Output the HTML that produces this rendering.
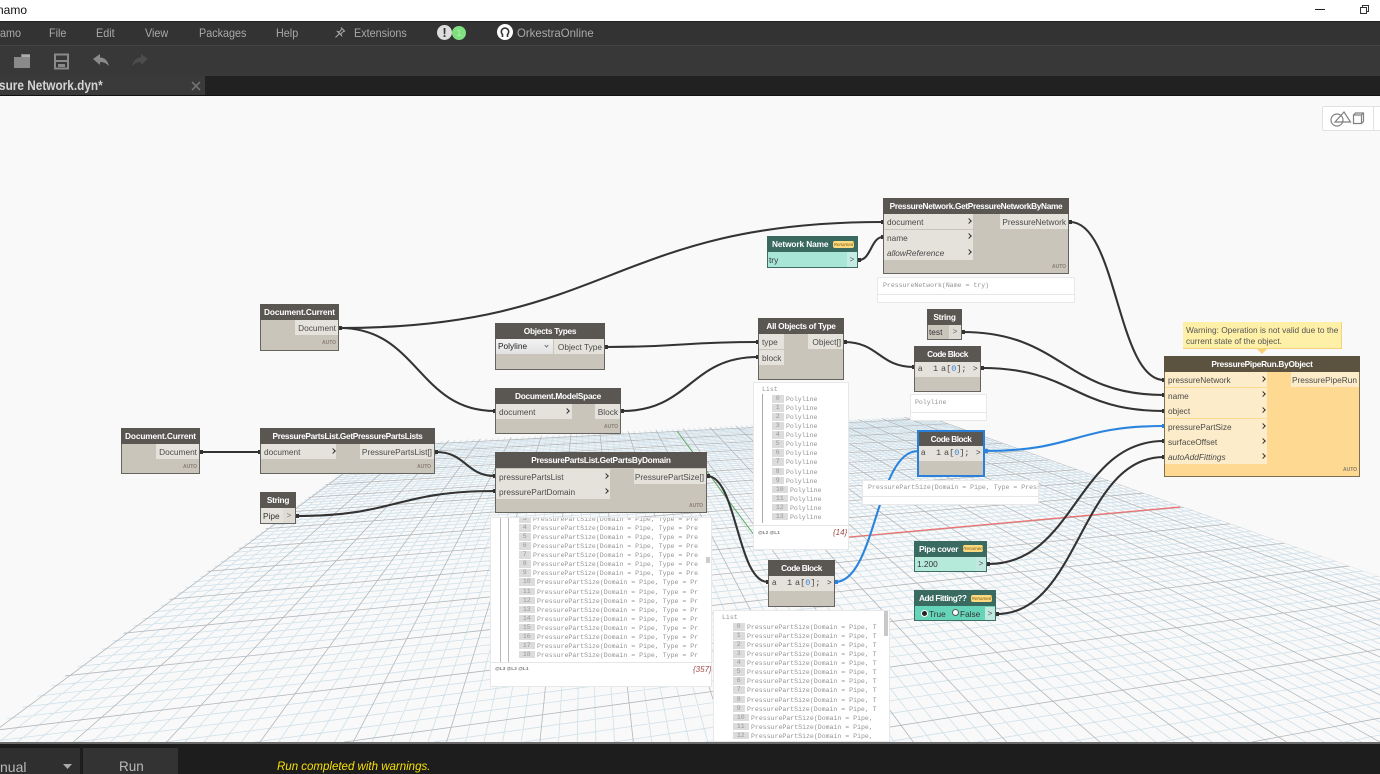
<!DOCTYPE html>
<html><head><meta charset="utf-8"><title>Dynamo</title>
<style>
html,body{margin:0;padding:0;width:1380px;height:774px;overflow:hidden;background:#f9f9f9}
body{position:relative;font-family:"Liberation Sans",sans-serif}
div,span,i{position:absolute;box-sizing:border-box;white-space:nowrap}
.m{color:#a9a9a9;font-size:12px;top:26px;line-height:15px;transform-origin:0 50%;transform:scaleX(.9)}
.n{background:#c9c5bb;border:1px solid #66645f}
.h{background:#5a5753;color:#fff;font-weight:bold;font-size:8.3px;letter-spacing:-.28px;text-align:center;line-height:16px;height:16px}
.cb{letter-spacing:-.5px}
.r{background:#e5e2db;color:#4a4a4a;font-size:8.3px;line-height:16px;height:15px;padding-left:3px}
.o{background:#e5e2db;color:#4a4a4a;font-size:8.3px;line-height:16px;height:15px;text-align:right;padding-right:2px}
.c{width:4px;height:4px;border-top:1.6px solid #333;border-right:1.6px solid #333;transform:rotate(45deg)}
.a{color:#8b8072;font-size:5px;font-weight:bold}
.p{background:#fff;border:1px solid #e8e8e8;font-family:"Liberation Mono",monospace;font-size:6.55px;color:#939393;overflow:hidden}
.l{left:0;right:0;height:1px;background:#e6e6e6}
.t{color:#444;font-size:8.3px}
.list{font-family:"Liberation Mono",monospace;font-size:6.55px;line-height:9.07px;color:#939393;overflow:hidden}
.list p{margin:0;height:9.07px;white-space:nowrap}
.list b{font-weight:normal;display:inline-block;background:#dcdcdc;color:#999;text-align:center;width:11.5px;height:7.5px;line-height:7.5px;margin-right:2.5px;vertical-align:1px}
.list .d b{width:15.5px}
.ft{font-size:4.8px;font-weight:bold;color:#777}
.ct{font-size:8px;font-style:italic;color:#a24b4b}
.code{background:#e5e2db;font-family:"Liberation Mono",monospace;font-size:8.5px;color:#444;line-height:15px}
</style></head>
<body>
<!-- title -->
<div style="left:0;top:0;width:1380px;height:21px;background:#fff"></div>
<div style="left:-3px;top:3px;font-size:12px;line-height:15px;color:#111">namo</div>
<div style="left:1315px;top:9px;width:10px;height:1px;background:#222"></div>
<div style="left:1362px;top:5px;width:7px;height:7px;border:1px solid #333;background:#fff"></div>
<div style="left:1360px;top:7px;width:7px;height:7px;border:1px solid #333;background:#fff"></div>
<!-- menu -->
<div style="left:0;top:21px;width:1380px;height:25px;background:#333;border-top:1px solid #222;border-bottom:1px solid #454545"></div>
<div class="m" style="left:0">amo</div>
<div class="m" style="left:49px">File</div>
<div class="m" style="left:96px">Edit</div>
<div class="m" style="left:145px">View</div>
<div class="m" style="left:199px">Packages</div>
<div class="m" style="left:276px">Help</div>
<svg style="position:absolute;left:333px;top:26px" width="14" height="14" viewBox="0 0 14 14" fill="none" stroke="#aaa" stroke-width="1"><path d="M8 1.500l4 4M9 2.500L6.500 6 4.500 5.500l4 4L8 7.500l3-2.500M6.500 7.500L2.500 11.500"/></svg>
<div class="m" style="left:354px">Extensions</div>
<div style="left:437px;top:25px;width:15px;height:15px;border-radius:50%;background:#ddd;color:#333;font-weight:bold;font-size:13px;line-height:15px;text-align:center">!</div>
<div style="left:452px;top:26px;width:14px;height:14px;border-radius:50%;background:#7fe07f;color:#aef0ae;font-size:9px;line-height:14px;text-align:center">1</div>
<div style="left:497px;top:24px;width:16px;height:16px;border-radius:50%;background:#fff"></div>
<svg style="position:absolute;left:497px;top:24px" width="16" height="16" viewBox="0 0 16 16" fill="none" stroke="#333" stroke-width="1.600"><path d="M5.500 13V10.500A3.700 3.700 0 1 1 10.500 10.500V13"/></svg>
<div class="m" style="left:517px;top:26px;transform:scaleX(.95)">OrkestraOnline</div>
<!-- toolbar -->
<div style="left:0;top:46px;width:1380px;height:30px;background:#383838"></div>
<svg style="position:absolute;left:0;top:46px" width="160" height="30" viewBox="0 0 160 30">
<path d="M14 11h7v-3h9v14H14z" fill="#8a8a8a"/><path d="M22 10h8" stroke="#bbb" stroke-width="1.500"/>
<path d="M55 8.500h13v14H55z" fill="none" stroke="#8a8a8a" stroke-width="2"/><path d="M55 15h13" stroke="#8a8a8a" stroke-width="2"/><path d="M58 18h7v3h-7z" fill="#8a8a8a"/>
<path d="M93 13l7-5v3.500c5 0 8 3.500 9 9-2-3-5-4.500-9-4.500V19z" fill="#8a8a8a"/>
<path d="M148 13l-7-5v3.500c-5 0-8 3.500-9 9 2-3 5-4.500 9-4.500V19z" fill="#4d4d4d"/>
</svg>
<!-- tabs -->
<div style="left:0;top:76px;width:1380px;height:20px;background:#212121;border-bottom:1px solid #111"></div>
<div style="left:0;top:76px;width:205px;height:19px;background:#3a3a3a"></div>
<div style="left:-1px;top:77px;font-size:13.500px;line-height:17px;color:#d4d4d4;font-weight:bold;transform-origin:0 0;transform:scaleX(.875)">sure Network.dyn*</div>
<svg style="position:absolute;left:191px;top:81px" width="10" height="10"><path d="M1 1l8 8M9 1l-8 8" stroke="#777" stroke-width="1.500"/></svg>

<!-- canvas -->
<div style="left:0;top:96px;width:1380px;height:646px;background:#f9f9f9"></div>
<svg id="grid" style="position:absolute;left:0;top:0" width="1380" height="774" viewBox="0 0 1380 774">
<defs><clipPath id="gc"><polygon points="381,444 927,416 1380,577 1380,742 -25,742"/></clipPath></defs>
<g clip-path="url(#gc)" id="gg"></g>
<path d="M677 431L760 543" stroke="#5fa85f" stroke-width="1" fill="none"/>
<path d="M761 545L1180 507" stroke="#f07070" stroke-width="1.200" fill="none"/>
</svg>
<script>
(function(){
var minor='',major='';
for(var n=0;n<=100;n++){var x=-20+18.665*n;var ex=x,ey=742;
if(x>1385){ey=295+447*(1385-585)/(x-585);ex=1385;}
if(x<-5){ey=295+447*(-5-585)/(x-585);ex=-5;}
var s='M585 295L'+ex.toFixed(1)+' '+ey.toFixed(1);if(n%5==0)major+=s;else minor+=s;}
for(var i=0;i<=90;i++){var m=i/5;var dy=2982/(21.93-m);var yg=295+dy;var xg=585+dy/1.363;
var k=(yg-276)/(3738-xg);/* y = 276 + k*(3738-x) */
var y1=276+k*(3738-1385);if(y1>742)continue;
var x0=0,y0=276+k*3738;if(y0>742){x0=3738-(742-276)/k;y0=742;}
var s='M1385 '+y1.toFixed(1)+'L'+x0.toFixed(1)+' '+y0.toFixed(1);if(i%5==0)major+=s;else minor+=s;}
document.getElementById('gg').innerHTML='<path d="'+minor+'" stroke="#cfe0ea" stroke-width=".8" fill="none"/><path d="'+major+'" stroke="#b0b8bd" stroke-width=".8" fill="none"/>';
})();
</script>

<!-- geometry toggle -->
<div style="left:1322px;top:106px;width:58px;height:25px;background:#fff;border:1px solid #e2e2e2;border-right:0;border-radius:2px 0 0 2px"></div>
<div style="left:1373px;top:106px;width:1px;height:25px;background:#e2e2e2"></div>
<svg style="position:absolute;left:1328px;top:108px" width="40" height="22" viewBox="1328 108 40 22" fill="none" stroke="#808080" stroke-width="1.200"><circle cx="1337" cy="120" r="6"/><path d="M1335 122L1344 112 1350.500 122zM1353.500 115h8v8.500h-8zM1353.500 115l2-2h8v8.500l-2 2M1361.500 115l2-2"/></svg>

<!-- wires -->
<svg style="position:absolute;left:0;top:0" width="1380" height="774" viewBox="0 0 1380 774" fill="none" stroke="#333" stroke-width="2.100">
<path d="M340 328C611 328 611 222 883 222"/>
<path d="M340 328C418 328 418 411 495 411"/>
<path d="M859 260C871 260 871 237 883 237"/>
<path d="M1070 222C1117 222 1117 380 1164 380"/>
<path d="M962 332C1063 332 1063 395 1164 395"/>
<path d="M982 368C1073 368 1073 411 1164 411"/>
<path d="M606 347C682 347 682 342 758 342"/>
<path d="M622 411C690 411 690 357 758 357"/>
<path d="M844 342C879 342 879 367 914 367"/>
<path d="M200 452H260"/>
<path d="M436 452C466 452 466 476 495 476"/>
<path d="M297 516C396 516 396 491 495 491"/>
<path d="M707 476C737 476 737 582 768 582"/>
<path d="M988 564C1076 564 1076 441 1164 441"/>
<path d="M997 614C1080 614 1080 457 1164 457"/>
<path d="M835 582C876 582 876 451 918 451" stroke="#2a84de"/>
<path d="M985 451C1075 451 1075 426 1164 426" stroke="#2a84de"/>
<!-- connector nubs -->
<g fill="#333" stroke="none">
<rect x="339" y="326" width="3" height="4"/><rect x="493" y="409" width="2" height="4"/><rect x="881" y="220" width="2" height="4"/><rect x="881" y="235" width="2" height="4"/>
<rect x="858" y="258" width="3" height="4"/><rect x="1069" y="220" width="3" height="4"/><rect x="1162" y="378" width="2" height="4"/><rect x="1162" y="393" width="2" height="4"/>
<rect x="1162" y="409" width="2" height="4"/><rect x="1162" y="439" width="2" height="4"/><rect x="1162" y="455" width="2" height="4"/><rect x="962" y="330" width="3" height="4"/>
<rect x="981" y="366" width="3" height="4"/><rect x="605" y="345" width="3" height="4"/><rect x="756" y="340" width="2" height="4"/><rect x="621" y="409" width="3" height="4"/>
<rect x="756" y="355" width="2" height="4"/><rect x="844" y="340" width="3" height="4"/><rect x="912" y="365" width="2" height="4"/><rect x="200" y="450" width="3" height="4"/>
<rect x="258" y="450" width="2" height="4"/><rect x="435" y="450" width="3" height="4"/><rect x="493" y="474" width="2" height="4"/><rect x="296" y="514" width="3" height="4"/>
<rect x="493" y="489" width="2" height="4"/><rect x="707" y="474" width="3" height="4"/><rect x="766" y="580" width="2" height="4"/><rect x="987" y="562" width="3" height="4"/><rect x="996" y="612" width="3" height="4"/>
</g>
<g fill="#2a84de" stroke="none"><rect x="835" y="580" width="3" height="4"/><rect x="985" y="449" width="3" height="4"/><rect x="1162" y="424" width="2" height="4"/></g>
</svg>

<!-- Network By Name -->
<div class="n" style="left:883px;top:198px;width:186px;height:76px"></div>
<div class="h" style="left:883px;top:198px;width:186px;letter-spacing:-.33px">PressureNetwork.GetPressureNetworkByName</div>
<div class="r" style="left:884px;top:214px;width:89px">document</div><i class="c" style="left:967px;top:219px"></i>
<div class="r" style="left:884px;top:230px;width:89px">name</div><i class="c" style="left:967px;top:234px"></i>
<div class="r" style="left:884px;top:245px;width:89px;font-style:italic">allowReference</div><i class="c" style="left:967px;top:250px"></i>
<div class="o" style="left:1000px;top:214px;width:68px">PressureNetwork</div>
<div class="a" style="left:1052px;top:264px">AUTO</div>
<div class="p" style="left:877px;top:277px;width:198px;height:26px"><span style="left:5px;top:4px">PressureNetwork(Name = try)</span><div class="l" style="top:16px"></div></div>

<!-- Network Name -->
<div class="n" style="left:767px;top:236px;width:91px;height:32px;background:#a8e6d8;border-color:#3d6d64"></div>
<div class="h" style="left:767px;top:236px;width:91px;background:#39695f;text-align:left;padding-left:5px;letter-spacing:-.1px">Network Name</div>
<div style="left:833px;top:241px;width:21px;height:7px;background:#fdd97f;border-radius:2px;color:#7a5a10;font-size:4.500px;line-height:7px;text-align:center;font-style:italic">Renamed</div>
<div class="t" style="left:769px;top:255px;color:#333">try</div>
<div style="left:847px;top:252px;width:10px;height:15px;background:#c5ece3;color:#555;font-size:8px;text-align:center;line-height:15px">&gt;</div>

<!-- All objects -->
<div class="n" style="left:758px;top:318px;width:86px;height:62px"></div>
<div class="h" style="left:758px;top:318px;width:86px">All Objects of Type</div>
<div class="r" style="left:759px;top:334px;width:25px">type</div>
<div class="r" style="left:759px;top:350px;width:25px">block</div>
<div class="o" style="left:808px;top:334px;width:35px">Object[]</div>

<!-- String test -->
<div class="n" style="left:927px;top:309px;width:35px;height:31px"></div>
<div class="h" style="left:927px;top:309px;width:35px">String</div>
<div class="t" style="left:929px;top:327px;color:#333">test</div>
<div style="left:949px;top:325px;width:12px;height:14px;background:#dedbd4;color:#666;font-size:8px;text-align:center;line-height:14px">&gt;</div>

<!-- Code block 1 -->
<div class="n" style="left:914px;top:346px;width:67px;height:46px"></div>
<div class="h cb" style="left:914px;top:346px;width:67px">Code Block</div>
<div class="code" style="left:915px;top:362px;width:65px;height:15px"></div>
<div class="t" style="left:918px;top:364px;font-size:8px">a</div>
<div class="code" style="left:933px;top:362px;background:none">1</div>
<div class="code" style="left:941px;top:362px;background:none">a[<span style="position:static;color:#3a86d8">0</span>];</div>
<div class="t" style="left:973px;top:364px;font-size:8px">&gt;</div>
<div class="p" style="left:910px;top:394px;width:77px;height:27px"><span style="left:4px;top:4px">Polyline</span><div class="l" style="top:17px"></div></div>

<!-- Doc current top -->
<div class="n" style="left:260px;top:304px;width:79px;height:47px"></div>
<div class="h" style="left:260px;top:304px;width:79px;letter-spacing:-.12px">Document.Current</div>
<div class="o" style="left:295px;top:320px;width:43px">Document</div>
<div class="a" style="left:322px;top:340px">AUTO</div>

<!-- Objects types -->
<div class="n" style="left:495px;top:323px;width:110px;height:47px"></div>
<div class="h" style="left:495px;top:323px;width:110px">Objects Types</div>
<div style="left:496px;top:339px;width:57px;height:15px;background:linear-gradient(#f2f2f2,#e2e2e2);color:#222;font-size:8.300px;line-height:14px;padding-left:2px">Polyline</div>
<div style="left:545px;top:344px;width:3px;height:3px;border-bottom:1px solid #777;border-right:1px solid #777;transform:rotate(45deg)"></div>
<div class="o" style="left:554px;top:339px;width:50px">Object Type</div>

<!-- ModelSpace -->
<div class="n" style="left:495px;top:388px;width:126px;height:46px"></div>
<div class="h" style="left:495px;top:388px;width:126px">Document.ModelSpace</div>
<div class="r" style="left:496px;top:404px;width:76px">document</div><i class="c" style="left:565px;top:409px"></i>
<div class="o" style="left:595px;top:404px;width:25px">Block</div>
<div class="a" style="left:604px;top:424px">AUTO</div>

<!-- Doc current left -->
<div class="n" style="left:121px;top:428px;width:79px;height:46px"></div>
<div class="h" style="left:121px;top:428px;width:79px;letter-spacing:-.12px">Document.Current</div>
<div class="o" style="left:156px;top:444px;width:43px">Document</div>
<div class="a" style="left:183px;top:464px">AUTO</div>

<!-- Lists -->
<div class="n" style="left:260px;top:428px;width:175px;height:46px"></div>
<div class="h" style="left:260px;top:428px;width:175px;letter-spacing:-.33px">PressurePartsList.GetPressurePartsLists</div>
<div class="r" style="left:261px;top:444px;width:75px">document</div><i class="c" style="left:331px;top:449px"></i>
<div class="o" style="left:360px;top:444px;width:74px">PressurePartsList[]</div>
<div class="a" style="left:417px;top:464px">AUTO</div>

<!-- String pipe -->
<div class="n" style="left:260px;top:492px;width:36px;height:32px"></div>
<div class="h" style="left:260px;top:492px;width:36px">String</div>
<div style="left:261px;top:508px;width:33px;height:15px;background:#e5e2db"></div>
<div class="t" style="left:263px;top:511px;color:#333">Pipe</div>
<div style="left:283px;top:508px;width:12px;height:15px;background:#dedbd4;color:#777;font-size:8px;text-align:center;line-height:15px">&gt;</div>

<!-- Parts by domain list -->
<div class="p" style="left:490px;top:517px;width:222px;height:170px">
<div style="left:9px;top:0;width:1px;height:145px;background:#bbb"></div>
<div style="left:17px;top:0;width:1px;height:145px;background:#bbb"></div>
<div class="l" style="top:144px"></div>
<div class="list" style="left:28px;top:-3px;width:180px;height:146px">
<p><b>3</b>PressurePartSize(Domain = Pipe, Type = Pre</p>
<p><b>4</b>PressurePartSize(Domain = Pipe, Type = Pre</p>
<p><b>5</b>PressurePartSize(Domain = Pipe, Type = Pre</p>
<p><b>6</b>PressurePartSize(Domain = Pipe, Type = Pre</p>
<p><b>7</b>PressurePartSize(Domain = Pipe, Type = Pre</p>
<p><b>8</b>PressurePartSize(Domain = Pipe, Type = Pre</p>
<p><b>9</b>PressurePartSize(Domain = Pipe, Type = Pre</p>
<p class="d"><b>10</b>PressurePartSize(Domain = Pipe, Type = Pr</p>
<p class="d"><b>11</b>PressurePartSize(Domain = Pipe, Type = Pr</p>
<p class="d"><b>12</b>PressurePartSize(Domain = Pipe, Type = Pr</p>
<p class="d"><b>13</b>PressurePartSize(Domain = Pipe, Type = Pr</p>
<p class="d"><b>14</b>PressurePartSize(Domain = Pipe, Type = Pr</p>
<p class="d"><b>15</b>PressurePartSize(Domain = Pipe, Type = Pr</p>
<p class="d"><b>16</b>PressurePartSize(Domain = Pipe, Type = Pr</p>
<p class="d"><b>17</b>PressurePartSize(Domain = Pipe, Type = Pr</p>
<p class="d"><b>18</b>PressurePartSize(Domain = Pipe, Type = Pr</p>
</div>
<div style="left:215px;top:39px;width:4px;height:6px;background:#ccc"></div>
<div class="ft" style="left:4px;top:149px;font-family:'Liberation Sans',sans-serif">@L3 @L2 @L1</div>
<div class="ct" style="left:202px;top:147px;font-family:'Liberation Sans',sans-serif">{357}</div>
</div>

<!-- Parts by domain -->
<div class="n" style="left:495px;top:452px;width:212px;height:61px"></div>
<div class="h" style="left:495px;top:452px;width:212px">PressurePartsList.GetPartsByDomain</div>
<div class="r" style="left:496px;top:469px;width:114px">pressurePartsList</div><i class="c" style="left:604px;top:474px"></i>
<div class="r" style="left:496px;top:484px;width:114px">pressurePartDomain</div><i class="c" style="left:604px;top:489px"></i>
<div class="o" style="left:634px;top:469px;width:72px">PressurePartSize[]</div>
<div class="a" style="left:689px;top:503px">AUTO</div>

<!-- All objects list -->
<div class="p" style="left:753px;top:382px;width:96px;height:168px">
<span style="left:8px;top:3px">List</span>
<div style="left:8px;top:11px;width:1px;height:129px;background:#aaa"></div>
<div class="list" style="left:18px;top:12px;width:75px;height:130px">
<p><b>0</b>Polyline</p><p><b>1</b>Polyline</p><p><b>2</b>Polyline</p><p><b>3</b>Polyline</p><p><b>4</b>Polyline</p><p><b>5</b>Polyline</p><p><b>6</b>Polyline</p><p><b>7</b>Polyline</p><p><b>8</b>Polyline</p><p><b>9</b>Polyline</p>
<p class="d"><b>10</b>Polyline</p><p class="d"><b>11</b>Polyline</p><p class="d"><b>12</b>Polyline</p><p class="d"><b>13</b>Polyline</p>
</div>
<div class="l" style="top:142px"></div>
<div class="ft" style="left:4px;top:148px;font-family:'Liberation Sans',sans-serif">@L2 @L1</div>
<div class="ct" style="left:79px;top:145px;font-family:'Liberation Sans',sans-serif">{14}</div>
</div>

<!-- Code block 2 -->
<div class="n" style="left:768px;top:560px;width:67px;height:47px"></div>
<div class="h cb" style="left:768px;top:560px;width:67px">Code Block</div>
<div class="code" style="left:769px;top:576px;width:65px;height:15px"></div>
<div class="t" style="left:772px;top:578px;font-size:8px">a</div>
<div class="code" style="left:787px;top:576px;background:none">1</div>
<div class="code" style="left:795px;top:576px;background:none">a[<span style="position:static;color:#3a86d8">0</span>];</div>
<div class="t" style="left:827px;top:578px;font-size:8px">&gt;</div>

<!-- Code block 2 list -->
<div class="p" style="left:713px;top:610px;width:177px;height:132px">
<span style="left:8px;top:3px">List</span>
<div class="list" style="left:19px;top:12px;width:144px;height:118px">
<p><b>0</b>PressurePartSize(Domain = Pipe, T</p>
<p><b>1</b>PressurePartSize(Domain = Pipe, T</p>
<p><b>2</b>PressurePartSize(Domain = Pipe, T</p>
<p><b>3</b>PressurePartSize(Domain = Pipe, T</p>
<p><b>4</b>PressurePartSize(Domain = Pipe, T</p>
<p><b>5</b>PressurePartSize(Domain = Pipe, T</p>
<p><b>6</b>PressurePartSize(Domain = Pipe, T</p>
<p><b>7</b>PressurePartSize(Domain = Pipe, T</p>
<p><b>8</b>PressurePartSize(Domain = Pipe, T</p>
<p><b>9</b>PressurePartSize(Domain = Pipe, T</p>
<p class="d"><b>10</b>PressurePartSize(Domain = Pipe,</p>
<p class="d"><b>11</b>PressurePartSize(Domain = Pipe,</p>
<p class="d"><b>12</b>PressurePartSize(Domain = Pipe,</p>
</div>
<div style="left:170px;top:0;width:4px;height:25px;background:#c8c8c8"></div>
</div>

<!-- Blue code block -->
<div class="n" style="left:917px;top:430px;width:68px;height:47px;border:2px solid #2a80d8"></div>
<div class="h cb" style="left:919px;top:432px;width:64px;height:14px;line-height:14px">Code Block</div>
<div class="code" style="left:919px;top:446px;width:64px;height:15px"></div>
<div class="t" style="left:921px;top:448px;font-size:8px">a</div>
<div class="code" style="left:936px;top:446px;background:none">1</div>
<div class="code" style="left:944px;top:446px;background:none">a[<span style="position:static;color:#3a86d8">0</span>];</div>
<div class="t" style="left:976px;top:448px;font-size:8px">&gt;</div>
<div class="p" style="left:862px;top:480px;width:177px;height:25px"><span style="left:5px;top:3px">PressurePartSize(Domain = Pipe, Type = Press</span><div class="l" style="top:15px"></div></div>

<!-- Pipe cover -->
<div class="n" style="left:914px;top:541px;width:73px;height:31px;background:#b5eadb;border-color:#3d6d64"></div>
<div class="h" style="left:914px;top:541px;width:73px;background:#3a6b60;text-align:left;padding-left:5px">Pipe cover</div>
<div style="left:963px;top:545px;width:20px;height:7px;background:#fdd97f;border-radius:2px;color:#7a5a10;font-size:4.500px;line-height:7px;text-align:center;font-style:italic">Renamed</div>
<div class="t" style="left:917px;top:559px;color:#333">1.200</div>
<div style="left:976px;top:557px;width:10px;height:14px;background:#c0e8de;color:#555;font-size:8px;text-align:center;line-height:14px">&gt;</div>

<!-- Add fitting -->
<div class="n" style="left:914px;top:590px;width:82px;height:31px;background:#66d4b8;border-color:#3d6d64"></div>
<div class="h" style="left:914px;top:590px;width:82px;background:#3a6b60;text-align:left;padding-left:5px;letter-spacing:-.5px">Add Fitting??</div>
<div style="left:971px;top:595px;width:21px;height:7px;background:#fdd97f;border-radius:2px;color:#7a5a10;font-size:4.500px;line-height:7px;text-align:center;font-style:italic">Renamed</div>
<div style="left:921px;top:610px;width:7px;height:7px;border-radius:50%;background:#222;border:1.500px solid #fff"></div>
<div class="t" style="left:929px;top:609px;color:#333">True</div>
<div style="left:952px;top:609px;width:7px;height:7px;border-radius:50%;background:#fff;border:1px solid #555"></div>
<div class="t" style="left:960px;top:609px;color:#333">False</div>
<div style="left:985px;top:607px;width:10px;height:13px;background:#c0e8de;color:#555;font-size:8px;text-align:center;line-height:13px">&gt;</div>

<!-- Warning -->
<div style="left:1183px;top:322px;width:159px;height:27px;background:#fff0a8;border-right:1px solid #f2d27a;border-bottom:1px solid #f2d27a;color:#555;font-size:8.300px;line-height:10.500px;padding:3px 3px">Warning: Operation is not valid due to the<br>current state of the object.</div>
<svg style="position:absolute;left:1257px;top:349px" width="10" height="5"><path d="M0 0h10L5 5z" fill="#f7d07a"/></svg>

<!-- Pipe run -->
<div class="n" style="left:1164px;top:356px;width:196px;height:121px;background:#fdd992;border-color:#7f714f"></div>
<div class="h" style="left:1164px;top:356px;width:196px;background:#5b5240">PressurePipeRun.ByObject</div>
<div class="r" style="left:1165px;top:372px;width:102px;background:#fdecc9">pressureNetwork</div><i class="c" style="left:1261px;top:377px"></i>
<div class="r" style="left:1165px;top:388px;width:102px;background:#fdecc9">name</div><i class="c" style="left:1261px;top:392px"></i>
<div class="r" style="left:1165px;top:403px;width:102px;background:#fdecc9">object</div><i class="c" style="left:1261px;top:408px"></i>
<div class="r" style="left:1165px;top:419px;width:102px;background:#fdecc9">pressurePartSize</div><i class="c" style="left:1261px;top:424px"></i>
<div class="r" style="left:1165px;top:434px;width:102px;background:#fdecc9">surfaceOffset</div><i class="c" style="left:1261px;top:439px"></i>
<div class="r" style="left:1165px;top:449px;width:102px;background:#fdecc9;font-style:italic">autoAddFittings</div><i class="c" style="left:1261px;top:454px"></i>
<div class="o" style="left:1291px;top:372px;width:68px;background:#fdecc9">PressurePipeRun</div>
<div class="a" style="left:1343px;top:467px">AUTO</div>

<!-- bottom -->
<div style="left:0;top:742px;width:1380px;height:32px;background:#1d1d1d;border-top:2px solid #6b6b6b"></div>
<div style="left:0;top:748px;width:80px;height:26px;background:#2f2f2f"></div>
<div style="left:83px;top:748px;width:95px;height:26px;background:#333"></div>
<div style="left:0;top:759px;height:15px;font-size:14px;line-height:16px;color:#b8b8b8;overflow:hidden">nual</div>
<svg style="position:absolute;left:63px;top:764px" width="9" height="6"><path d="M0 0h9L4.500 5z" fill="#aaa"/></svg>
<div style="left:119px;top:759px;height:15px;font-size:13.500px;line-height:16px;color:#b8b8b8;overflow:hidden">Run</div>
<div style="left:277px;top:760px;font-size:11.500px;line-height:14px;font-style:italic;color:#f7e000">Run completed with warnings.</div>
</body></html>
